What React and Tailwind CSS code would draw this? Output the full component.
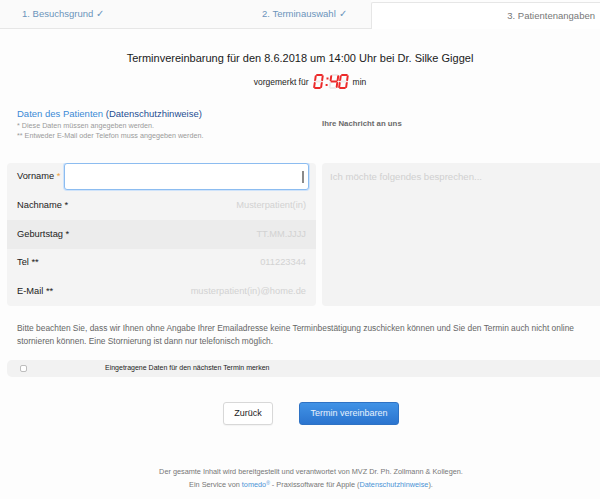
import React from 'react';

const SEGMENTS = {
  a: [1.2, 0, 6.6, 2],
  b: [7, 1.2, 2, 6],
  c: [7, 8, 2, 6],
  d: [1.2, 13, 6.6, 2],
  e: [0, 8, 2, 6],
  f: [0, 1.2, 2, 6],
  g: [1.2, 6.5, 6.6, 2],
};

const DIGITS = {
  0: 'abcdef',
  4: 'bcfg',
};

const Digit = ({ value, x }) => (
  <g transform={`translate(${x} 0) skewX(-8)`}>
    {Object.entries(SEGMENTS).map(([key, [sx, sy, w, h]]) => (
      <rect
        key={key}
        x={sx}
        y={sy}
        width={w}
        height={h}
        rx="0.8"
        fill={DIGITS[value].includes(key) ? '#ec2a2a' : '#eeeaea'}
      />
    ))}
  </g>
);

const Clock = () => (
  <svg width="36" height="16" viewBox="0 0 36 16" className="mx-[4px]">
    <Digit value={0} x={2} />
    <rect x="13.5" y="3.5" width="2" height="2" fill="#ec2a2a" />
    <rect x="12.6" y="10" width="2" height="2" fill="#ec2a2a" />
    <Digit value={4} x={17.5} />
    <Digit value={0} x={27} />
  </svg>
);

const rows = [
  { label: 'Nachname', star: '*', placeholder: 'Musterpatient(in)', bg: 'bg-[#f4f4f4]' },
  { label: 'Geburtstag', star: '*', placeholder: 'TT.MM.JJJJ', bg: 'bg-[#ececec]' },
  { label: 'Tel', star: '**', placeholder: '011223344', bg: 'bg-[#f4f4f4]' },
  { label: 'E-Mail', star: '**', placeholder: 'musterpatient(in)@home.de', bg: 'bg-[#f4f4f4]' },
];

export default function App() {
  return (
    <div className="w-[600px] h-[499px] overflow-hidden bg-[#fdfdfd] font-['Liberation_Sans',Arial,sans-serif] text-[#222]">
      {/* Tabs */}
      <div className="flex h-[29px] text-[9.5px]">
        <div className="w-[200px] flex items-center pl-[22px] text-[#6b94bb] bg-[#fafafa] border-b border-[#e6e6e6] pt-[1px]">
          1. Besuchsgrund <span className="ml-[3px]">✓</span>
        </div>
        <div className="w-[171px] flex items-center pl-[62px] text-[#6b94bb] bg-[#fafafa] border-b border-[#e6e6e6] pt-[1px]">
          2. Terminauswahl <span className="ml-[3px]">✓</span>
        </div>
        <div className="flex-1 flex items-center justify-end pr-[5px] mt-[2px] text-[#777] bg-white border-l border-t border-[#e6e6e6] rounded-tl-[2px]">
          3. Patientenangaben
        </div>
      </div>

      {/* Heading */}
      <div className="flex flex-col items-center">
        <h1 className="mt-[22px] text-[11px] leading-[14px] text-[#1a1a1a]">
          Terminvereinbarung für den 8.6.2018 um 14:00 Uhr bei Dr. Silke Giggel
        </h1>
        <div className="mt-[9px] flex items-center text-[8.5px] text-[#222] pl-[20px]">
          <span>vorgemerkt für</span>
          <Clock />
          <span>min</span>
        </div>
      </div>

      {/* Section titles */}
      <div className="flex mt-[18px] pl-[17px]">
        <div className="w-[305px]">
          <div className="text-[9.5px] leading-[12px] text-[#3b8ad6]">
            Daten des Patienten{' '}
            <span className="text-[#1f4f93]">(Datenschutzhinweise)</span>
          </div>
          <div className="text-[7.2px] leading-[10px] text-[#9a9a9a] mt-[1px]">
            * Diese Daten müssen angegeben werden.
          </div>
          <div className="text-[7.2px] leading-[10px] text-[#9a9a9a]">
            ** Entweder E-Mail oder Telefon muss angegeben werden.
          </div>
        </div>
        <div className="pt-[10px] text-[7.8px] font-bold text-[#6a6a6a]">Ihre Nachricht an uns</div>
      </div>

      {/* Form */}
      <div className="flex gap-[6px] pl-[7px] mt-[22px]">
        <div className="w-[309px] rounded-[4px] overflow-hidden flex flex-col">
          <div className="h-[28.6px] flex items-center bg-[#f4f4f4] pr-[7px]">
            <span className="w-[57px] pl-[10px] text-[9.3px] shrink-0">
              Vorname <span className="text-[#f0a23c]">*</span>
            </span>
            <div className="flex-1 h-[27px] self-start bg-white border border-[#8cbcf0] rounded-[3px] shadow-[0_0_0_1px_#cfe3fa] flex items-center justify-end pr-[4px]">
              <div className="w-[2px] h-[12px] bg-[#8a8a8a]" />
            </div>
          </div>
          {rows.map((row) => (
            <div key={row.label} className={`h-[28.6px] flex items-center justify-between px-[10px] ${row.bg}`}>
              <span className="text-[9.3px]">
                {row.label} {row.star}
              </span>
              <span className="text-[9.3px] text-[#d2d2d2]">{row.placeholder}</span>
            </div>
          ))}
        </div>
        <div className="flex-1 h-[143px] bg-[#f3f3f3] rounded-l-[4px] px-[8px] pt-[7px] text-[9.6px] text-[#d0d0d0]">
          Ich möchte folgendes besprechen...
        </div>
      </div>

      {/* Notice */}
      <p className="mt-[16px] pl-[17px] pr-[10px] text-[8.4px] leading-[13px] text-[#666]">
        Bitte beachten Sie, dass wir Ihnen ohne Angabe Ihrer Emailadresse keine Terminbestätigung zuschicken können und Sie den Termin auch nicht online stornieren können. Eine Stornierung ist dann nur telefonisch möglich.
      </p>

      {/* Remember checkbox */}
      <div className="ml-[7px] mt-[12px] h-[17px] flex items-center bg-[#f2f2f2] rounded-l-[5px]">
        <div className="ml-[13px] w-[7px] h-[7px] bg-white border border-[#bdbdbd] rounded-[2px]" />
        <span className="ml-[78px] text-[7px] text-[#222]">Eingetragene Daten für den nächsten Termin merken</span>
      </div>

      {/* Buttons */}
      <div className="flex justify-center gap-[26px] pl-[22px] mt-[25px]">
        <button className="w-[50px] h-[23px] bg-white border border-[#d8d8d8] rounded-[3px] text-[9px] text-[#222] shadow-[0_1px_1px_rgba(0,0,0,0.04)]">
          Zurück
        </button>
        <button className="w-[100px] h-[23px] bg-gradient-to-b from-[#4193e6] to-[#2b74cf] rounded-[3px] text-[9px] text-[#e8f1fc] border border-[#2e72c4]">
          Termin vereinbaren
        </button>
      </div>

      {/* Footer */}
      <div className="mt-[40px] pl-[22px] flex flex-col items-center text-[7.3px] leading-[13px] text-[#777]">
        <span>Der gesamte Inhalt wird bereitgestellt und verantwortet von MVZ Dr. Ph. Zollmann &amp; Kollegen.</span>
        <span>
          Ein Service von <span className="text-[#4a93d6]">tomedo</span>
          <sup className="text-[5px] text-[#4a93d6]">®</sup> - Praxissoftware für Apple (
          <span className="text-[#4a93d6]">Datenschutzhinweise</span>).
        </span>
      </div>
    </div>
  );
}
